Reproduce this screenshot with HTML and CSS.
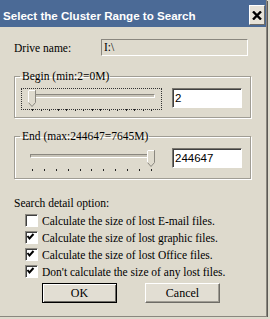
FILE: index.html
```html
<!DOCTYPE html>
<html lang="en">
<head>
  <meta charset="UTF-8">
  <meta name="viewport" content="width=device-width, initial-scale=1.0">
  <title>Select the Cluster Range to Search</title>
  <link rel="stylesheet" href="styles.css">
</head>
<body>
<div class="dialog">
  <div class="titlebar">
    <span class="title">Select the Cluster Range to Search</span>
    <button class="close-button" aria-label="Close">
      <svg width="10" height="9" viewBox="0 0 10 9">
        <path d="M1 0.5 L9 8.5 M9 0.5 L1 8.5" stroke="#000" stroke-width="2.4"/>
      </svg>
    </button>
  </div>

  <div class="content">
    <div class="drive-row">
      <label>Drive name:</label>
      <div class="drive-field">I:\</div>
    </div>

    <fieldset class="group group-begin">
      <legend>Begin (min:2=0M)</legend>
      <div class="group-row">
        <div class="slider focused">
          <div class="track"></div>
          <svg class="thumb" style="left: 7px;" width="8" height="17" viewBox="0 0 8 17">
            <path d="M0.5 0.5 H7.5 V12.5 L4 16.5 L0.5 12.5 Z" fill="#dedacd" stroke="#8a877f"/>
            <path d="M0.5 12.5 V0.5 H7" fill="none" stroke="#fff"/>
          </svg>
          <div class="ticks">
            <i></i><i></i><i></i><i></i><i></i><i></i><i></i><i></i><i></i><i></i><i></i><i></i><i></i><i></i><i></i>
          </div>
        </div>
        <input class="number" type="text" value="2">
      </div>
    </fieldset>

    <fieldset class="group group-end">
      <legend>End (max:244647=7645M)</legend>
      <div class="group-row">
        <div class="slider">
          <div class="track"></div>
          <svg class="thumb" style="left: 126px;" width="8" height="17" viewBox="0 0 8 17">
            <path d="M0.5 0.5 H7.5 V12.5 L4 16.5 L0.5 12.5 Z" fill="#dedacd" stroke="#8a877f"/>
            <path d="M0.5 12.5 V0.5 H7" fill="none" stroke="#fff"/>
          </svg>
          <div class="ticks">
            <i></i><i></i><i></i><i></i><i></i><i></i><i></i><i></i><i></i><i></i><i></i>
          </div>
        </div>
        <input class="number" type="text" value="244647">
      </div>
    </fieldset>

    <div class="options-label">Search detail option:</div>
    <div class="options">
      <label class="option"><span class="check"></span>Calculate the size of lost E-mail files.</label>
      <label class="option"><span class="check checked"></span>Calculate the size of lost graphic files.</label>
      <label class="option"><span class="check checked"></span>Calculate the size of lost Office files.</label>
      <label class="option"><span class="check checked"></span>Don't calculate the size of any lost files.</label>
    </div>

    <div class="buttons">
      <button class="btn default">OK</button>
      <button class="btn">Cancel</button>
    </div>
  </div>
</div>
</body>
</html>
```

FILE: styles.css
```css
body {
  margin: 0;
  background: #dedacd;
  font-family: 'Liberation Serif', serif;
  font-size: 11.5px;
  color: #000;
}

.dialog {
  width: 266px;
  height: 316px;
  background: #dedacd;
  border-right: 1px solid #8a877f;
  border-bottom: 1px solid #8a877f;
  box-shadow: 1px 1px 0 #5c5a55;
}

.titlebar {
  height: 27px;
  background: #4b6a96;
  display: flex;
  align-items: center;
  padding-left: 3px;
  position: relative;
}

.title {
  font-family: 'Liberation Sans', sans-serif;
  font-weight: bold;
  font-size: 11.6px;
  color: #fff;
  margin-top: 3px;
}

.close-button {
  position: absolute;
  left: 249px;
  top: 5px;
  width: 16px;
  height: 20px;
  padding: 0;
  border: 1px solid;
  border-color: #fff #6e6c66 #6e6c66 #fff;
  background: #e6e2d8;
  display: flex;
  align-items: center;
  justify-content: center;
}

.content {
  padding: 0 16px 0 14px;
}

.drive-row {
  display: flex;
  align-items: center;
  margin-top: 12px;
  height: 17px;
}

.drive-row label {
  width: 87px;
}

.drive-field {
  width: 143px;
  height: 15px;
  line-height: 15px;
  padding-left: 2px;
  border: 1px solid;
  border-color: #8a877f #fff #fff #8a877f;
}

.group {
  margin: 13px 0 0;
  width: 236px;
  box-sizing: border-box;
  padding: 5px 8px 6px 6px;
  border: 1px solid #a09d94;
  box-shadow: inset 1px 1px 0 #fff, 1px 1px 0 #fff;
}

.group legend {
  padding: 0 1px 0 2px;
  margin-left: -1px;
  line-height: 14px;
}

.group-end {
  margin-top: 11px;
  padding-bottom: 7px;
}

.group-row {
  display: flex;
  gap: 10px;
  height: 23px;
}

.slider {
  position: relative;
  width: 141px;
  height: 22px;
  box-sizing: border-box;
}

.slider.focused {
  outline: 1px dotted #333;
  outline-offset: -1px;
}

.track {
  margin: 6px 7px 0 9px;
  height: 2px;
  border-top: 1px solid #8a877f;
  border-left: 1px solid #8a877f;
  border-bottom: 1px solid #fff;
  border-right: 1px solid #fff;
  background: #c8c4b8;
}

.thumb {
  position: absolute;
  top: 2px;
}

.ticks {
  display: flex;
  justify-content: space-between;
  margin: 11px 10px 0 11px;
}

.ticks i {
  display: block;
  width: 1px;
  height: 2px;
  background: #222;
}

.number {
  width: 70px;
  height: 20px;
  box-sizing: border-box;
  margin: 0;
  padding: 0 2px;
  font-family: 'Liberation Sans', sans-serif;
  font-size: 11.5px;
  background: #fff;
  border: 1px solid;
  border-color: #7a776f #fff #fff #7a776f;
  box-shadow: inset 1px 1px 0 #404040;
}

.options-label {
  margin-top: 17px;
  line-height: 14px;
}

.options {
  margin-top: 2px;
  padding-left: 11px;
}

.option {
  display: flex;
  align-items: center;
  height: 17px;
  gap: 4px;
}

.check {
  width: 13px;
  height: 13px;
  box-sizing: border-box;
  background: #fff;
  border: 1px solid;
  border-color: #8a877f #fff #fff #8a877f;
  box-shadow: inset 1px 1px 0 #404040;
  flex-shrink: 0;
}

.check.checked {
  background: #fff url("data:image/svg+xml,%3Csvg xmlns='http://www.w3.org/2000/svg' width='11' height='11'%3E%3Cpath d='M2.5 5 L4.5 7.5 L8.5 3' stroke='%23000' stroke-width='2' fill='none'/%3E%3C/svg%3E") no-repeat -1px -1px;
}

.buttons {
  display: flex;
  gap: 28px;
  margin-top: 3px;
  padding-left: 28px;
}

.btn {
  width: 75px;
  height: 20px;
  padding: 0;
  font-family: 'Liberation Serif', serif;
  font-size: 12px;
  background: #e2ded3;
  border: 1px solid;
  border-color: #fff #6e6c66 #6e6c66 #fff;
  box-shadow: inset -1px -1px 0 #a09d94;
}

.btn.default {
  border: 1px solid #000;
  box-shadow: inset 1px 1px 0 #fff, inset -1px -1px 0 #6e6c66;
}
```
